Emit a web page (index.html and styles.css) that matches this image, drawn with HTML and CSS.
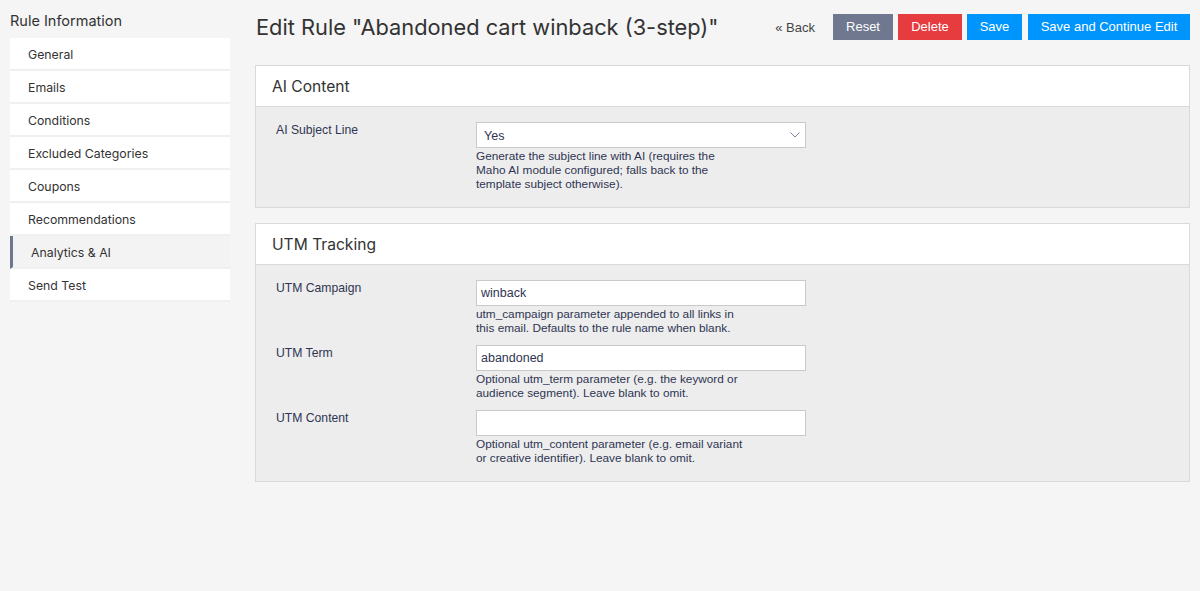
FILE: index.html
```html
<!DOCTYPE html>
<html>
<head>
<meta charset="utf-8">
<link rel="stylesheet" href="styles.css">
</head>
<body>
<div class="layout">
  <aside class="sidebar">
    <h3 class="side-title">Rule Information</h3>
    <ul class="tabs">
      <li class="tab">General</li>
      <li class="tab">Emails</li>
      <li class="tab">Conditions</li>
      <li class="tab">Excluded Categories</li>
      <li class="tab">Coupons</li>
      <li class="tab">Recommendations</li>
      <li class="tab active">Analytics &amp; AI</li>
      <li class="tab">Send Test</li>
    </ul>
  </aside>
  <main class="main">
    <div class="head">
      <h1 class="page-title">Edit Rule "Abandoned cart winback (3-step)"</h1>
      <div class="actions">
        <a class="back">« Back</a>
        <button class="btn btn-gray">Reset</button>
        <button class="btn btn-red">Delete</button>
        <button class="btn btn-blue">Save</button>
        <button class="btn btn-blue btn-wide">Save and Continue Edit</button>
      </div>
    </div>

    <section class="box">
      <div class="box-head">AI Content</div>
      <div class="box-body">
        <div class="row">
          <label class="label">AI Subject Line</label>
          <div class="value">
            <div class="select">Yes<svg class="chev" width="10" height="6" viewBox="0 0 10 6"><path d="M0.5 0.5 L5 5 L9.5 0.5" fill="none" stroke="#7d8499" stroke-width="1"/></svg></div>
            <p class="note">Generate the subject line with AI (requires the<br>Maho AI module configured; falls back to the<br>template subject otherwise).</p>
          </div>
        </div>
      </div>
    </section>

    <section class="box">
      <div class="box-head">UTM Tracking</div>
      <div class="box-body">
        <div class="row">
          <label class="label">UTM Campaign</label>
          <div class="value">
            <div class="input">winback</div>
            <p class="note">utm_campaign parameter appended to all links in<br>this email. Defaults to the rule name when blank.</p>
          </div>
        </div>
        <div class="row">
          <label class="label">UTM Term</label>
          <div class="value">
            <div class="input">abandoned</div>
            <p class="note">Optional utm_term parameter (e.g. the keyword or<br>audience segment). Leave blank to omit.</p>
          </div>
        </div>
        <div class="row">
          <label class="label">UTM Content</label>
          <div class="value">
            <div class="input"></div>
            <p class="note">Optional utm_content parameter (e.g. email variant<br>or creative identifier). Leave blank to omit.</p>
          </div>
        </div>
      </div>
    </section>
  </main>
</div>
</body>
</html>
```

FILE: styles.css
```css
* { box-sizing: border-box; }
html, body { margin: 0; padding: 0; }
body {
  background: #f5f5f5;
  font-family: "Liberation Sans", Arial, sans-serif;
  color: #2f3553;
  width: 1200px;
  height: 591px;
  overflow: hidden;
}
.layout {
  display: flex;
  gap: 25px;
  padding: 0 10px 0 10px;
}
.sidebar { width: 220px; flex: none; }
.side-title {
  margin: 0;
  height: 38px;
  padding-top: 11px;
  font-family: Inter, "Noto Sans", sans-serif;
  font-weight: 400;
  font-size: 14.5px;
  line-height: 20px;
  color: #333;
}
.tabs { list-style: none; margin: 0; padding: 0; }
.tab {
  height: 33px;
  background: #fff;
  border-bottom: 2px solid #f0f0f0;
  padding: 1px 0 0 18px;
  font-family: Inter, "Noto Sans", sans-serif;
  font-size: 12.3px;
  line-height: 31px;
  color: #333;
}
.tab.active {
  background: #f3f3f3;
  border-left: 3px solid #6e7791;
  padding-left: 18px;
}
.main { flex: 1; min-width: 0; }
.head {
  display: flex;
  align-items: center;
  justify-content: space-between;
  padding-top: 14px;
  height: 40px;
  margin-bottom: 25px;
}
.page-title {
  margin: 0;
  font-family: Inter, "Noto Sans", sans-serif;
  font-weight: 400;
  font-size: 21.8px;
  line-height: 26px;
  color: #333;
  padding-left: 1px;
}
.actions { display: flex; align-items: center; gap: 5px; }
.back {
  font-size: 13px;
  color: #444;
  margin-right: 13px;
}
.btn {
  height: 26px;
  border: 0;
  padding: 0;
  text-align: center;
  white-space: nowrap;
  font-family: "Liberation Sans", Arial, sans-serif;
  font-size: 13px;
  color: #fff;
  line-height: 26px;
}
.btn-gray { background: #6f788e; width: 60px; }
.btn-red { background: #e63b3f; width: 64px; }
.btn-blue { background: #0095fc; width: 55px; }
.btn-wide { width: 162px; margin-left: 1px; }
.box {
  border: 1px solid #d9d9d9;
  margin-bottom: 15px;
}
.box-head {
  background: #fff;
  height: 41px;
  padding-left: 16px;
  padding-top: 1px;
  font-family: Inter, "Noto Sans", sans-serif;
  font-size: 15.6px;
  line-height: 39px;
  color: #333;
  border-bottom: 1px solid #d9d9d9;
}
.box-body {
  background: #ededed;
  padding: 15px 0 6px 20px;
}
.row {
  display: flex;
  margin-bottom: 10px;
}
.label {
  width: 200px;
  flex: none;
  font-size: 12.2px;
  line-height: 16px;
  color: #2f3553;
}
.value { width: 330px; flex: none; }
.input, .select {
  height: 26px;
  background: #fff;
  border: 1px solid #c9c9c9;
  font-size: 12.5px;
  line-height: 24px;
  padding-left: 4px;
  color: #2f3553;
  position: relative;
}
.select { padding-left: 7px; padding-top: 1px; }
.chev { position: absolute; right: 5px; top: 9px; }
.note {
  margin: 1px 0 0 0;
  font-size: 11.8px;
  line-height: 14px;
  color: #2f3553;
  white-space: nowrap;
}
```
